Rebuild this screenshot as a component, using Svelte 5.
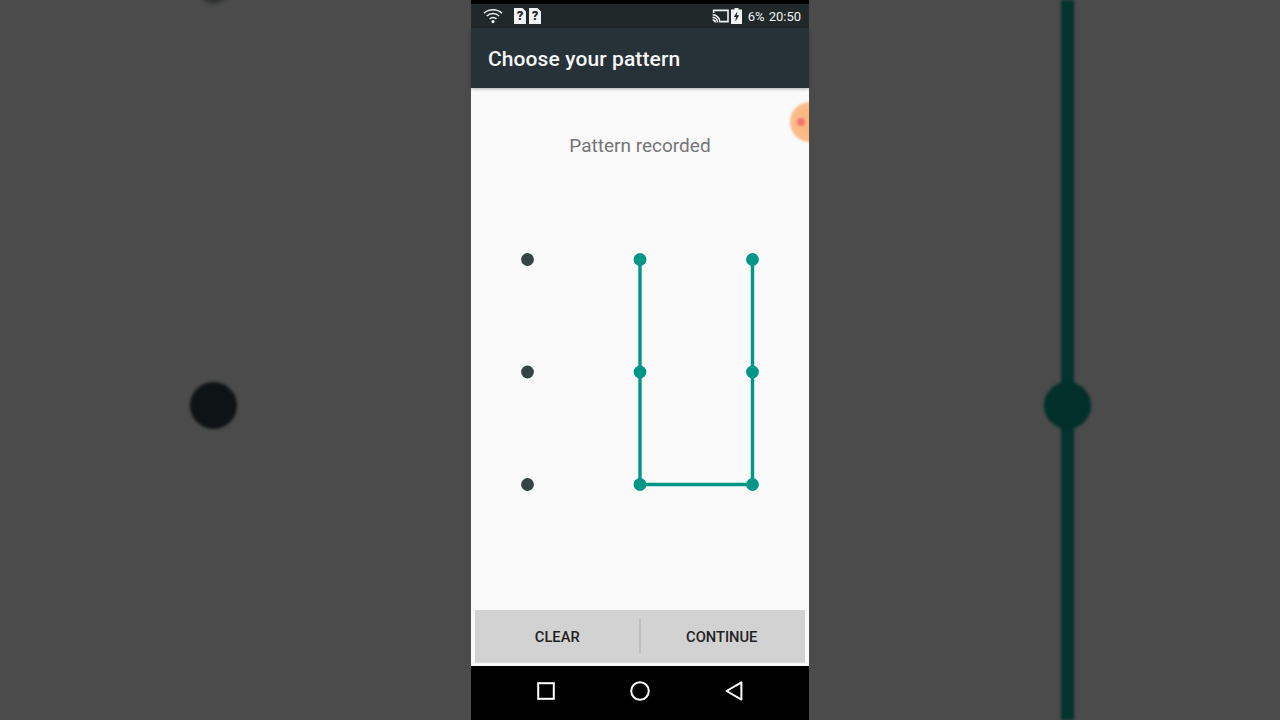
<script>
  const dots = [
    { x: 56.5, y: 171.5, on: false }, { x: 169, y: 171.5, on: true }, { x: 281.5, y: 171.5, on: true },
    { x: 56.5, y: 284, on: false }, { x: 169, y: 284, on: true }, { x: 281.5, y: 284, on: true },
    { x: 56.5, y: 396.5, on: false }, { x: 169, y: 396.5, on: true }, { x: 281.5, y: 396.5, on: true }
  ];
</script>

<div class="screen">
  <aside class="side left">
    <span class="blob top"></span>
    <span class="blob mid"></span>
  </aside>

  <main class="phone">
    <div class="blackline"></div>
    <div class="status">
      <div class="status-left">
        <svg width="20" height="16" viewBox="0 0 20 16" fill="none" stroke="#f2f4f4" stroke-width="1.5">
          <path d="M1 5.2 C6 .6 14 .6 19 5.2" />
          <path d="M3.8 8 C7.4 4.8 12.6 4.8 16.2 8" />
          <path d="M6.6 10.8 C8.6 9.2 11.4 9.2 13.4 10.8" />
          <circle cx="10" cy="13.6" r="1.6" fill="#f2f4f4" stroke="none" />
        </svg>
        <div class="sims">
          <span class="sim">?</span>
          <span class="sim">?</span>
        </div>
      </div>
      <div class="status-right">
        <svg width="17" height="14" viewBox="0 0 17 14" fill="none" stroke="#f2f4f4" stroke-width="1.6">
          <path d="M1.6 4 V1.4 H16 V12.6 H8.4" />
          <path d="M.6 5.8 C4.6 5.8 8 9 8 13.4" />
          <path d="M.6 8.4 C3.4 8.4 5.6 10.6 5.6 13.4" />
          <path d="M.6 11 C2.2 11 3.4 12 3.4 13.4" />
        </svg>
        <svg class="batt" width="11" height="16" viewBox="0 0 11 16">
          <path fill="#f2f4f4" d="M3.5 0 H7.5 V1.5 H11 V16 H0 V1.5 H3.5 Z" />
          <path fill="#20282a" d="M6.4 3.2 L2.8 9 H5 L4.4 13.6 L8.2 7.2 H5.8 Z" />
        </svg>
        <span class="pct">6%</span>
        <span class="clock">20:50</span>
      </div>
    </div>
    <header class="appbar">Choose your pattern</header>

    <section class="content">
      <p class="msg">Pattern recorded</p>
      <svg class="pattern" width="338" height="522" viewBox="0 0 338 522">
        <polyline points="169,171.5 169,396.5 281.5,396.5 281.5,171.5" fill="none" stroke="#009688" stroke-width="3.4" />
        {#each dots as d}
          <circle cx={d.x} cy={d.y} r="6.4" fill={d.on ? "#009688" : "#354545"} />
        {/each}
      </svg>
      <span class="bubble"><span class="bubble-dot"></span></span>
    </section>

    <div class="buttons">
      <button class="btn">CLEAR</button>
      <span class="divider"></span>
      <button class="btn">CONTINUE</button>
    </div>

    <nav class="nav">
      <svg width="18" height="18" viewBox="0 0 18 18" fill="none" stroke="#fff" stroke-width="2"><rect x="1.2" y="1.2" width="15.6" height="15.6" /></svg>
      <svg class="home" width="20" height="20" viewBox="0 0 20 20" fill="none" stroke="#fff" stroke-width="2"><circle cx="10" cy="10" r="8.8" /></svg>
      <svg width="18" height="20" viewBox="0 0 18 20" fill="none" stroke="#fff" stroke-width="2" stroke-linejoin="round"><path d="M16.4 1.4 V18.6 L1.6 10 Z" /></svg>
    </nav>
  </main>

  <aside class="side right">
    <span class="bar"></span>
    <span class="blob mid teal"></span>
  </aside>
</div>

<style>
  :global(body) {
    margin: 0;
    background: #4b4b4b;
  }
  .screen {
    display: flex;
    width: 1280px;
    height: 720px;
    overflow: hidden;
    font-family: Roboto, "Liberation Sans", sans-serif;
  }
  .side {
    position: relative;
    flex: 1;
    background: #4b4b4b;
    overflow: hidden;
  }
  .blob {
    position: absolute;
    width: 47px;
    height: 47px;
    border-radius: 50%;
    background: #0e1315;
    filter: blur(1.4px);
  }
  .left .blob.mid { left: 190px; top: 382px; }
  .left .blob.top { left: 196px; top: -39px; width: 36px; height: 42px; filter: blur(2px); background: #2a2d2e; }
  .right .blob.mid { left: 235px; top: 382px; }
  .blob.teal { background: #012f29; }
  .bar {
    position: absolute;
    left: 252px;
    top: 0;
    width: 13px;
    height: 720px;
    background: #02332d;
    filter: blur(1.8px);
  }
  .phone {
    width: 338px;
    height: 720px;
    flex: none;
    display: flex;
    flex-direction: column;
    background: #fafafa;
  }
  .blackline { height: 4px; background: #000; }
  .status {
    height: 24px;
    background: #20282a;
    display: flex;
    align-items: center;
    justify-content: space-between;
    padding: 0 8px 0 12px;
    color: #f2f4f4;
    font-size: 13px;
  }
  .status-left, .status-right { display: flex; align-items: center; }
  .sims { display: flex; gap: 3px; margin-left: 11px; }
  .sim {
    width: 12px;
    height: 16px;
    background: #f2f4f4;
    color: #20282a;
    font-size: 13px;
    font-weight: 900;
    line-height: 16px;
    text-align: center;
    clip-path: polygon(0 0, 70% 0, 100% 22%, 100% 100%, 0 100%);
  }
  .batt { margin-left: 2px; }
  .pct { margin-left: 6px; }
  .clock { margin-left: 4px; }
  .appbar {
    height: 60px;
    background: #263238;
    color: #f5f7f7;
    font-size: 21px;
    font-weight: 500;
    letter-spacing: 0.1px;
    line-height: 62px;
    padding-left: 17px;
    box-shadow: 0 1px 3px rgba(0, 0, 0, 0.3);
    position: relative;
    z-index: 1;
  }
  .content {
    position: relative;
    height: 522px;
    flex: none;
    overflow: hidden;
  }
  .msg {
    margin: 0;
    padding-top: 47px;
    text-align: center;
    font-size: 19px;
    line-height: 22px;
    color: #757575;
  }
  .pattern { position: absolute; left: 0; top: 0; }
  .bubble {
    position: absolute;
    left: 319px;
    top: 14px;
    width: 40px;
    height: 40px;
    border-radius: 50%;
    background: radial-gradient(circle at 50% 50%, #fcb47c 0%, #fdbc8c 70%, #fdd0ae 100%);
    filter: blur(1.2px);
  }
  .bubble-dot {
    position: absolute;
    left: 7px;
    top: 16px;
    width: 8px;
    height: 8px;
    border-radius: 50%;
    background: #f4746e;
  }
  .buttons {
    height: 52px;
    margin: 0 4px;
    display: flex;
    align-items: center;
    background: #d2d2d2;
    border-radius: 1px;
    box-shadow: 0 1px 1px rgba(0, 0, 0, 0.12);
  }
  .btn {
    flex: 1;
    height: 100%;
    border: 0;
    padding: 2px 0 0;
    background: none;
    font-family: inherit;
    font-size: 14.7px;
    font-weight: 500;
    color: #212121;
  }
  .btn:last-child { text-indent: -2px; }
  .divider { width: 2px; height: 34px; background: #bdbdbd; margin-left: -1px; }
  .nav {
    margin-top: 4px;
    height: 54px;
    background: #000;
    display: grid;
    grid-template-columns: repeat(3, 94px);
    justify-content: center;
    justify-items: center;
    align-items: center;
    padding-bottom: 4px;
    box-sizing: border-box;
  }
  .home { margin-right: 1px; }
</style>
